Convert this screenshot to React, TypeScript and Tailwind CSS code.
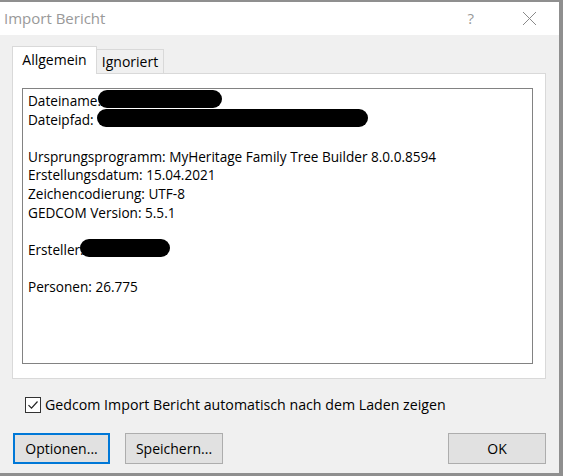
const LINES: { text: string; blob?: { left: number; width: number } }[] = [
  { text: "Dateiname:", blob: { left: 70, width: 124 } },
  { text: "Dateipfad:", blob: { left: 69, width: 271 } },
  { text: "" },
  { text: "Ursprungsprogramm: MyHeritage Family Tree Builder 8.0.0.8594" },
  { text: "Erstellungsdatum: 15.04.2021" },
  { text: "Zeichencodierung: UTF-8" },
  { text: "GEDCOM Version: 5.5.1" },
  { text: "" },
  { text: "Ersteller:", blob: { left: 52, width: 90 } },
  { text: "" },
  { text: "Personen: 26.775" },
];

export default function App() {
  return (
    <div className="flex h-[476px] w-[563px] flex-col overflow-hidden border-t-2 border-r-4 border-b-[3px] border-[#8f8f8f] bg-[#f0f0f0] font-['Open_Sans','Noto_Sans',sans-serif] text-[14px] text-black">
      {/* title bar */}
      <div className="flex h-[33px] shrink-0 items-center bg-white pl-[4px] pr-[22px] text-[#999]">
        <span className="text-[15px]">Import Bericht</span>
        <span className="ml-auto text-[15px]">?</span>
        <svg className="ml-[48px]" width="15" height="15" viewBox="0 0 15 15">
          <path d="M1 1 L14 14 M14 1 L1 14" stroke="#8a8a8a" strokeWidth="1" fill="none" />
        </svg>
      </div>

      <div className="flex flex-1 flex-col pl-[12px] pr-[13px] pt-[11px]">
        {/* tabs */}
        <div className="flex h-[27px] items-end">
          <div className="relative z-10 -mb-px flex h-[28px] w-[85px] items-center justify-center border border-b-0 border-[#d9d9d9] bg-white pb-[2px]">
            Allgemein
          </div>
          <div className="flex h-[24px] w-[67px] items-center justify-center border border-l-0 border-b-0 border-[#d9d9d9] bg-[#f0f0f0]">
            Ignoriert
          </div>
        </div>

        {/* panel */}
        <div className="h-[306px] border border-[#d9d9d9] bg-white pb-[14px] pl-[9px] pr-[12px] pt-[14px]">
          <div className="h-full border border-[#828282] bg-white pl-[5px] pt-[3px] text-[13.6px] leading-[18.6px]">
            {LINES.map((line, i) => (
              <div key={i} className="relative h-[18.6px] whitespace-nowrap">
                {line.text}
                {line.blob && (
                  <span
                    className="absolute top-[-2px] h-[18px] rounded-full bg-black"
                    style={{ left: line.blob.left, width: line.blob.width }}
                  />
                )}
              </div>
            ))}
          </div>
        </div>

        {/* checkbox */}
        <label className="mt-[15px] flex items-center pl-[13px]">
          <span className="flex h-[16px] w-[16px] items-center justify-center border border-[#333] bg-white">
            <svg width="12" height="12" viewBox="0 0 12 12">
              <path d="M1.5 6.2 L4.5 9.2 L10.5 2.5" stroke="#222" strokeWidth="1.2" fill="none" />
            </svg>
          </span>
          <span className="ml-[4px] text-[14.2px]">Gedcom Import Bericht automatisch nach dem Laden zeigen</span>
        </label>

        {/* buttons */}
        <div className="mt-[18px] flex items-center pl-px">
          <button
            type="button"
            className="h-[31px] w-[97px] border-2 border-[#0078d7] bg-[#e1e1e1]"
          >
            Optionen...
          </button>
          <button
            type="button"
            className="ml-[15px] h-[31px] w-[98px] border border-[#adadad] bg-[#e1e1e1]"
          >
            Speichern...
          </button>
          <button
            type="button"
            className="ml-auto h-[31px] w-[98px] border border-[#adadad] bg-[#e1e1e1]"
          >
            OK
          </button>
        </div>
      </div>
    </div>
  );
}
